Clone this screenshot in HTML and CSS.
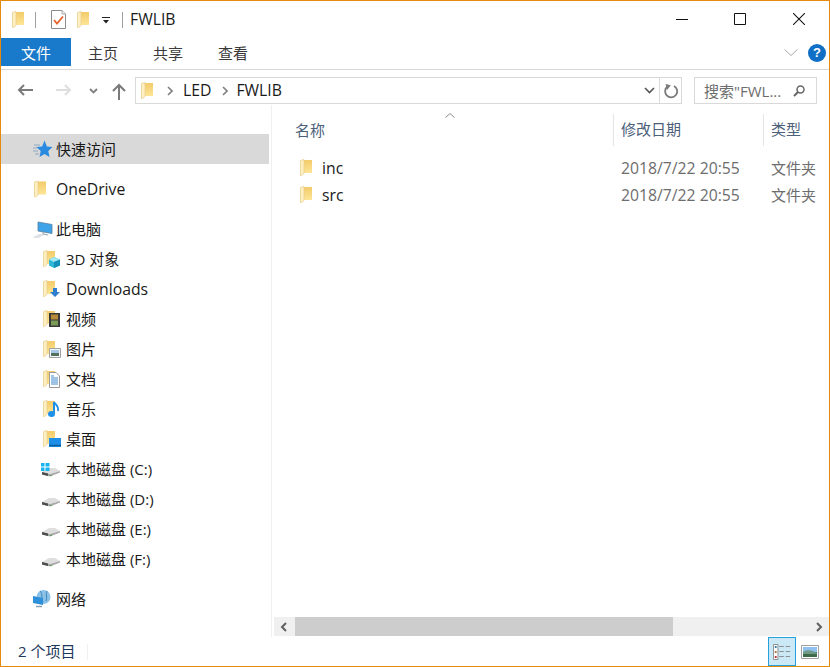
FILE: index.html
```html
<!DOCTYPE html>
<html lang="zh-CN">
<head>
<meta charset="utf-8">
<title>FWLIB</title>
<link rel="stylesheet" href="styles.css">
</head>
<body>
<svg class="sprite" aria-hidden="true">
  <defs>
    <linearGradient id="fy" x1="0" y1="0" x2="0" y2="1"><stop offset="0" stop-color="#f3cb6a"/><stop offset="1" stop-color="#fde596"/></linearGradient>
  </defs>
  <symbol id="folder" viewBox="0 0 12 17">
    <path d="M3 1H12V14H3Z" fill="url(#fy)"/>
    <path d="M.5 1.5 4 .5V14.500L1.500 16.500H.5Z" fill="#fff0c4" stroke="#e9cf8f" stroke-width=".8"/>
  </symbol>
  <symbol id="drive" viewBox="0 0 20 12">
    <path d="M1 6 8 2H14L19 5 9 8Z" fill="#dedede"/>
    <path d="M1 6 9 8 19 5V6.500L9 10.500 1 8.500Z" fill="#a9a9a9"/>
    <path d="M1 6 7 7.500V10L1 8.500Z" fill="#4d4d4d"/>
    <path d="M9 9h2v1H9z" fill="#5aa55a"/>
  </symbol>
</svg>
<div class="window">
  <header class="titlebar">
    <svg class="ic-folder"><use href="#folder"/></svg>
    <span class="tsep tsep-a"></span>
    <svg class="ic-doc" viewBox="0 0 15 19"><path d="M.5.500H11L14.500 4V18.500H.5Z" fill="#fff" stroke="#8c8c8c"/><path d="M11 .5V4H14.500" fill="#eee" stroke="#aaa"/><path d="M3 10 6 13.500 12 6.500" fill="none" stroke="#e8622c" stroke-width="1.800"/></svg>
    <svg class="ic-folder ic-folder-b"><use href="#folder"/></svg>
    <svg class="ic-qat" viewBox="0 0 8 7"><path d="M0 .5H8" stroke="#222"/><path d="M1 3H7L4 6.500Z" fill="#222"/></svg>
    <span class="tsep tsep-b"></span>
    <span class="wintitle lat">FWLIB</span>
    <div class="winbtns">
      <svg class="wb" viewBox="0 0 12 12"><path d="M0 6.500H12" stroke="#111"/></svg>
      <svg class="wb" viewBox="0 0 12 12"><path d="M.5.500H11.500V11.500H.5Z" fill="none" stroke="#111"/></svg>
      <svg class="wb wb-close" viewBox="0 0 12 12"><path d="M0 0 12 12M12 0 0 12" stroke="#111" stroke-width="1.050"/></svg>
    </div>
  </header>

  <nav class="ribbon">
    <span class="tab tab-file">文件</span>
    <span class="tab">主页</span>
    <span class="tab">共享</span>
    <span class="tab">查看</span>
    <svg class="rib-chev" viewBox="0 0 14 7"><path d="M.5.500 7 6.500 13.500.5" fill="none" stroke="#a8a8a8"/></svg>
    <span class="help">?</span>
  </nav>

  <div class="addrrow">
    <svg class="nav nav-back" viewBox="0 0 16 12"><path d="M16 6H2M7 1 2 6 7 11" fill="none" stroke="#7a7a7a" stroke-width="2"/></svg>
    <svg class="nav nav-fwd" viewBox="0 0 16 12"><path d="M0 6H14M9 1 14 6 9 11" fill="none" stroke="#dedede" stroke-width="2"/></svg>
    <svg class="nav nav-down" viewBox="0 0 9 6"><path d="M1 1 4.500 4.500 8 1" fill="none" stroke="#808080" stroke-width="1.800"/></svg>
    <svg class="nav nav-up" viewBox="0 0 14 17"><path d="M7 17V2M1 8 7 2 13 8" fill="none" stroke="#7a7a7a" stroke-width="2"/></svg>
    <div class="addrbox">
      <svg class="ic-folder"><use href="#folder"/></svg>
      <svg class="crumb-sep" viewBox="0 0 6 10"><path d="M1 1 5 5 1 9" fill="none" stroke="#808080" stroke-width="1.600"/></svg>
      <span class="crumb lat">LED</span>
      <svg class="crumb-sep" viewBox="0 0 6 10"><path d="M1 1 5 5 1 9" fill="none" stroke="#808080" stroke-width="1.600"/></svg>
      <span class="crumb lat">FWLIB</span>
      <svg class="addr-down" viewBox="0 0 11 7"><path d="M1 1 5.500 5.500 10 1" fill="none" stroke="#555" stroke-width="1.600"/></svg>
      <span class="addr-refresh">
        <svg viewBox="0 0 15 16"><path d="M5 3.200A6 6 0 1 0 11 3" fill="none" stroke="#7a7a7a" stroke-width="1.800"/><path d="M8 0 8.500 6 13 2Z" fill="#7a7a7a" transform="rotate(-10 9 3) translate(-5 0)"/></svg>
      </span>
    </div>
    <div class="searchbox">
      <span>搜索"FWL...</span>
      <svg viewBox="0 0 12 12"><circle cx="7.500" cy="4.500" r="3.500" fill="none" stroke="#666" stroke-width="1.500"/><path d="M5 7 1 11" stroke="#666" stroke-width="2"/></svg>
    </div>
  </div>

  <main class="main">
    <aside class="sidebar">
      <div class="row selected">
        <svg class="ni" viewBox="0 0 20 20"><path d="M11.500 1.500 13.900 7.500 19.500 8 15.300 12 16.500 18 11.500 15 6.500 18 7.700 12 3.500 8 9.100 7.500Z" fill="#2a8ae0"/><path d="M1 6H7M0 9H4M0 12H5M2 15H6" stroke="#8fa7c0" stroke-width="1"/></svg>
        <span>快速访问</span>
      </div>
      <div class="row group">
        <svg class="ni ni-f" viewBox="-1 0 20 17"><use href="#folder" width="12" height="17"/></svg>
        <span class="lat">OneDrive</span>
      </div>
      <div class="row group">
        <svg class="ni" viewBox="0 0 20 20"><path d="M5 3 19 5.500V14.500L5 12Z" fill="#3fa3ea" stroke="#5a7f9c" stroke-width=".8"/><path d="M0 18 6 15H12L6 19H1Z" fill="#dfe3e8"/><path d="M10 13V15L15 16" fill="none" stroke="#98a3ad"/></svg>
        <span>此电脑</span>
      </div>
      <div class="row child">
        <svg class="ni" viewBox="0 0 20 20"><use href="#folder" y="1" width="12" height="17"/><path d="M11 8 17 10.500V16.500L11 19 6 16.500V10.500Z" fill="#31b7d6"/><path d="M6 10.500 11 13 17 10.500 11 8Z" fill="#a3e8f2"/><path d="M11 13V19L17 16.500V10.500Z" fill="#1690b8"/></svg>
        <span>3D 对象</span>
      </div>
      <div class="row child">
        <svg class="ni" viewBox="0 0 20 20"><use href="#folder" y="1" width="12" height="17"/><path d="M10 9H14V13H17L12 18 7 13H10Z" fill="#2f7fd0"/></svg>
        <span class="lat">Downloads</span>
      </div>
      <div class="row child">
        <svg class="ni" viewBox="0 0 20 20"><use href="#folder" y="1" width="12" height="17"/><path d="M6 4H17V18H6Z" fill="#3a3a3a"/><path d="M8 5.500H15V10.500H8Z" fill="#b78a3a"/><path d="M8 11.500H15V16.500H8Z" fill="#7a9a55"/></svg>
        <span>视频</span>
      </div>
      <div class="row child">
        <svg class="ni" viewBox="0 0 20 20"><use href="#folder" y="1" width="12" height="17"/><path d="M6.500 9.500H17.500V18.500H6.500Z" fill="#f4f7fa" stroke="#a0a0a0"/><path d="M8 11H16V14H8Z" fill="#a7c7e8"/><path d="M8 14H16V17H8Z" fill="#54705c"/></svg>
        <span>图片</span>
      </div>
      <div class="row child">
        <svg class="ni" viewBox="0 0 20 20"><use href="#folder" y="1" width="12" height="17"/><path d="M6.500 3.500H13L16.500 7V18.500H6.500Z" fill="#fff" stroke="#9a9a9a"/><path d="M8 7H11M8 9H15M8 11H15M8 13H15M8 15H15" stroke="#3f87c9"/></svg>
        <span>文档</span>
      </div>
      <div class="row child">
        <svg class="ni" viewBox="0 0 20 20"><use href="#folder" y="1" width="12" height="17"/><path d="M11 3V14" stroke="#1e90e8" stroke-width="2"/><ellipse cx="8.500" cy="15" rx="3.500" ry="3" fill="#1e90e8"/><path d="M11 3C13 6 16 7 15 12" fill="none" stroke="#1e90e8" stroke-width="1.800"/></svg>
        <span>音乐</span>
      </div>
      <div class="row child">
        <svg class="ni" viewBox="0 0 20 20"><use href="#folder" y="1" width="12" height="17"/><path d="M6 9H18V18H6Z" fill="#1d8fe8"/><path d="M6 16.500H18" stroke="#0d5f9e" stroke-width="1.500"/></svg>
        <span>桌面</span>
      </div>
      <div class="row child">
        <svg class="ni ni-d" viewBox="0 0 20 20"><use href="#drive" y="7" width="20" height="12"/><path d="M0 7.500H3.500V4H0ZM4.500 4H8.500V7.500H4.500ZM0 8.500H3.500V12H0ZM4.500 8.500H8.500V12H4.500Z" fill="#19b3ef"/></svg>
        <span>本地磁盘 (C:)</span>
      </div>
      <div class="row child">
        <svg class="ni ni-d" viewBox="0 0 20 20"><use href="#drive" y="7" width="20" height="12"/></svg>
        <span>本地磁盘 (D:)</span>
      </div>
      <div class="row child">
        <svg class="ni ni-d" viewBox="0 0 20 20"><use href="#drive" y="7" width="20" height="12"/></svg>
        <span>本地磁盘 (E:)</span>
      </div>
      <div class="row child">
        <svg class="ni ni-d" viewBox="0 0 20 20"><use href="#drive" y="7" width="20" height="12"/></svg>
        <span>本地磁盘 (F:)</span>
      </div>
      <div class="row group">
        <svg class="ni" viewBox="0 0 20 20"><circle cx="10.500" cy="8" r="7" fill="#8cc2e8"/><path d="M7 2C10 5 8 9 10 13M14 2C12 6 15 8 13 12" fill="none" stroke="#3f86b8"/><path d="M0 7 10 9V16L0 14Z" fill="#2f8fd8"/><path d="M3 17.500H9" stroke="#8aa0b0" stroke-width="1.500"/></svg>
        <span>网络</span>
      </div>
    </aside>

    <section class="content">
      <div class="listing">
        <div class="sortcaret"><svg viewBox="0 0 10 5"><path d="M.5 4.500 5 .5 9.500 4.500" fill="none" stroke="#8a8a8a"/></svg></div>
        <div class="cols heads">
          <span class="h-name">名称</span>
          <span class="h-date">修改日期</span>
          <span class="h-type">类型</span>
        </div>
        <div class="cols file">
          <span class="f-name"><svg class="ic-folder"><use href="#folder"/></svg><span class="lat">inc</span></span>
          <span class="f-date lat">2018/7/22 20:55</span>
          <span class="f-type">文件夹</span>
        </div>
        <div class="cols file">
          <span class="f-name"><svg class="ic-folder"><use href="#folder"/></svg><span class="lat">src</span></span>
          <span class="f-date lat">2018/7/22 20:55</span>
          <span class="f-type">文件夹</span>
        </div>
      </div>
      <div class="hscroll">
        <svg class="sarrow" viewBox="0 0 7 10"><path d="M6 1 2 5 6 9" fill="none" stroke="#606060" stroke-width="2"/></svg>
        <div class="track"><div class="thumb"></div></div>
        <svg class="sarrow" viewBox="0 0 7 10"><path d="M1 1 5 5 1 9" fill="none" stroke="#606060" stroke-width="2"/></svg>
      </div>
    </section>
  </main>

  <footer class="status">
    <span class="count">2 个项目</span>
    <span class="ssep"></span>
    <div class="views">
      <span class="vbtn active">
        <svg viewBox="0 0 20 16" preserveAspectRatio="none"><path d="M.5.500H5.500V15.500H.5Z" fill="#fff" stroke="#8a8a8a"/><path d="M2 2H4V4H2Z" fill="#3a7ca8"/><path d="M2 7H4V9H2Z" fill="#b0703a"/><path d="M2 12H4V14H2Z" fill="#c03030"/><path d="M7 2.500H12M14 2.500H19M7 7.500H12M14 7.500H19M7 12.500H12M14 12.500H19" stroke="#8a8a8a"/></svg>
      </span>
      <span class="vbtn">
        <svg viewBox="0 0 18 14"><path d="M.5.500H17.500V13.500H.5Z" fill="#fff" stroke="#a0a0a0"/><path d="M2 2H16V7H2Z" fill="#8fc0f0"/><path d="M2 7H16V12H2Z" fill="#3f6a4a"/><path d="M2 7C6 4 11 5 16 8V9H2Z" fill="#6f9a86"/></svg>
      </span>
    </div>
  </footer>
</div>
</body>
</html>
```

FILE: styles.css
```css
* { box-sizing: border-box; }
html, body { margin: 0; padding: 0; background: #fff; }
body {
  font-family: "Open Sans", "Noto Sans CJK SC", sans-serif;
  font-size: 15px;
  color: #1a1a1a;
}
.sprite { display: block; width: 0; height: 0; }
.lat { font-size: 15.75px; }
.window {
  width: 830px;
  height: 667px;
  border: 1px solid #e68a0c;
  display: flex;
  flex-direction: column;
  overflow: hidden;
}
svg { display: block; flex: none; }

/* title bar */
.titlebar { height: 37px; flex: none; display: flex; align-items: center; padding-left: 11px; }
.ic-folder { width: 12px; height: 17px; }
.ic-doc { width: 15px; height: 19px; margin-left: 15px; }
.ic-folder-b { margin-left: 11px; }
.ic-qat { width: 8px; height: 7px; margin-left: 13px; margin-top: 2px; }
.tsep { width: 1px; height: 16px; background: #a0a0a0; }
.tsep-a { margin-left: 11px; }
.tsep-b { margin-left: 12px; }
.wintitle { margin: -2px 0 0 7px; }
.winbtns { margin: -1px 0 0 auto; display: flex; gap: 46px; padding-right: 24px; }
.wb { width: 12px; height: 12px; }
.wb-close { margin-left: 1px; }

/* ribbon */
.ribbon { height: 32px; flex: none; display: flex; align-items: flex-start; border-bottom: 1px solid #d9d9d9; }
.tab { height: 28px; line-height: 30px; width: 30px; margin-left: 35px; color: #3a3a3a; white-space: nowrap; }
.tab:nth-child(2) { margin-left: 17px; }
.tab-file { width: 70px; margin-left: 0; background: #1979ca; color: #fff; text-align: center; }
.rib-chev { width: 14px; height: 7px; margin-left: auto; margin-top: 11px; }
.help { width: 18px; height: 18px; margin: 6px 3px 0 10px; border-radius: 50%; background: #0f6fc6; color: #fff; font: bold 13px/18px "Liberation Sans", sans-serif; text-align: center; }

/* address row */
.addrrow { height: 35px; flex: none; display: flex; align-items: flex-start; padding-top: 7px; }
.nav { margin-top: 7px; }
.nav-back { width: 16px; height: 12px; margin-left: 16px; }
.nav-fwd { width: 16px; height: 12px; margin-left: 23px; }
.nav-down { width: 9px; height: 6px; margin-left: 17px; margin-top: 11px; }
.nav-up { width: 14px; height: 17px; margin-left: 14px; margin-top: 6px; }
.addrbox { width: 547px; height: 27px; margin-left: 9px; border: 1px solid #d9d9d9; display: flex; align-items: center; padding-left: 5px; }
.crumb-sep { width: 6px; height: 10px; margin-left: 14px; }
.crumb { margin: -2px 0 0 10px; color: #1a1a1a; }
.crumb + .crumb-sep { margin-left: 11px; }
.crumb + .crumb-sep + .crumb { margin-left: 8px; }
.addr-down { width: 11px; height: 7px; margin-left: auto; }
.addr-refresh { width: 22px; height: 25px; margin-left: 4px; border-left: 1px solid #d9d9d9; display: flex; align-items: center; justify-content: center; }
.addr-refresh svg { width: 15px; height: 16px; }
.searchbox { width: 123px; height: 27px; margin-left: 12px; border: 1px solid #d9d9d9; display: flex; align-items: center; justify-content: space-between; padding: 0 11px 0 9px; color: #6d6d6d; white-space: nowrap; }
.searchbox svg { width: 12px; height: 12px; }

/* main */
.main { flex: 1; min-height: 0; display: flex; }
.sidebar { width: 271px; flex: none; padding: 29px 2px 0 0; border-right: 1px solid #f0f0f0; }
.row { height: 30px; display: flex; align-items: center; gap: 3px; padding-left: 32px; white-space: nowrap; }
.row span { margin-top: -2px; }
.row .lat { margin-top: 0; }
.row .ni { width: 20px; height: 20px; }
.row .ni-d { margin: 0 2px 0 -2px; }
.group { margin-top: 10px; }
.child { padding-left: 42px; }
.selected { background: #d9d9d9; }
.content { flex: 1; min-width: 0; display: flex; flex-direction: column; padding-left: 2px; }
.listing { flex: 1; min-height: 0; overflow: hidden; position: relative; padding-top: 9px; }
.sortcaret { position: absolute; left: 171px; top: 8px; }
.sortcaret svg { width: 10px; height: 5px; }
.cols { display: grid; grid-template-columns: 339px 150px 1fr; white-space: nowrap; }
.heads { height: 32px; align-items: center; color: #4c607a; margin-bottom: 8px; }
.h-name { padding-left: 21px; margin-top: -2px; }
.h-date, .h-type { height: 32px; line-height: 30px; border-left: 1px solid #e5e5e5; padding-left: 7px; }
.file { height: 27px; align-items: center; color: #6d6d6d; }
.f-name { display: flex; align-items: center; gap: 10px; padding-left: 26px; color: #1a1a1a; }
.f-date, .f-type { padding-left: 8px; }
.hscroll { height: 19px; flex: none; margin-bottom: 1px; background: #f0f0f0; display: flex; align-items: center; }
.sarrow { width: 7px; height: 10px; margin: 0 6px; }
.track { flex: 1; height: 19px; }
.thumb { width: 378px; height: 19px; margin-left: 2px; background: #cdcdcd; }

/* status */
.status { height: 29px; flex: none; display: flex; align-items: center; padding-left: 17px; }
.count { color: #1e395b; margin-top: -2px; }
.ssep { width: 1px; height: 16px; background: #f0f0f0; margin-left: 12px; }
.views { margin-left: auto; display: flex; align-self: stretch; padding-right: 7px; gap: 2px; }
.vbtn { width: 28px; display: flex; align-items: center; justify-content: center; border: 1px solid transparent; }
.vbtn svg { width: 18px; height: 16px; }
.vbtn + .vbtn svg { width: 18px; height: 14px; }
.vbtn + .vbtn { width: 24px; }
.active { background: #cbe8f6; border-color: #26a0da; }
```
